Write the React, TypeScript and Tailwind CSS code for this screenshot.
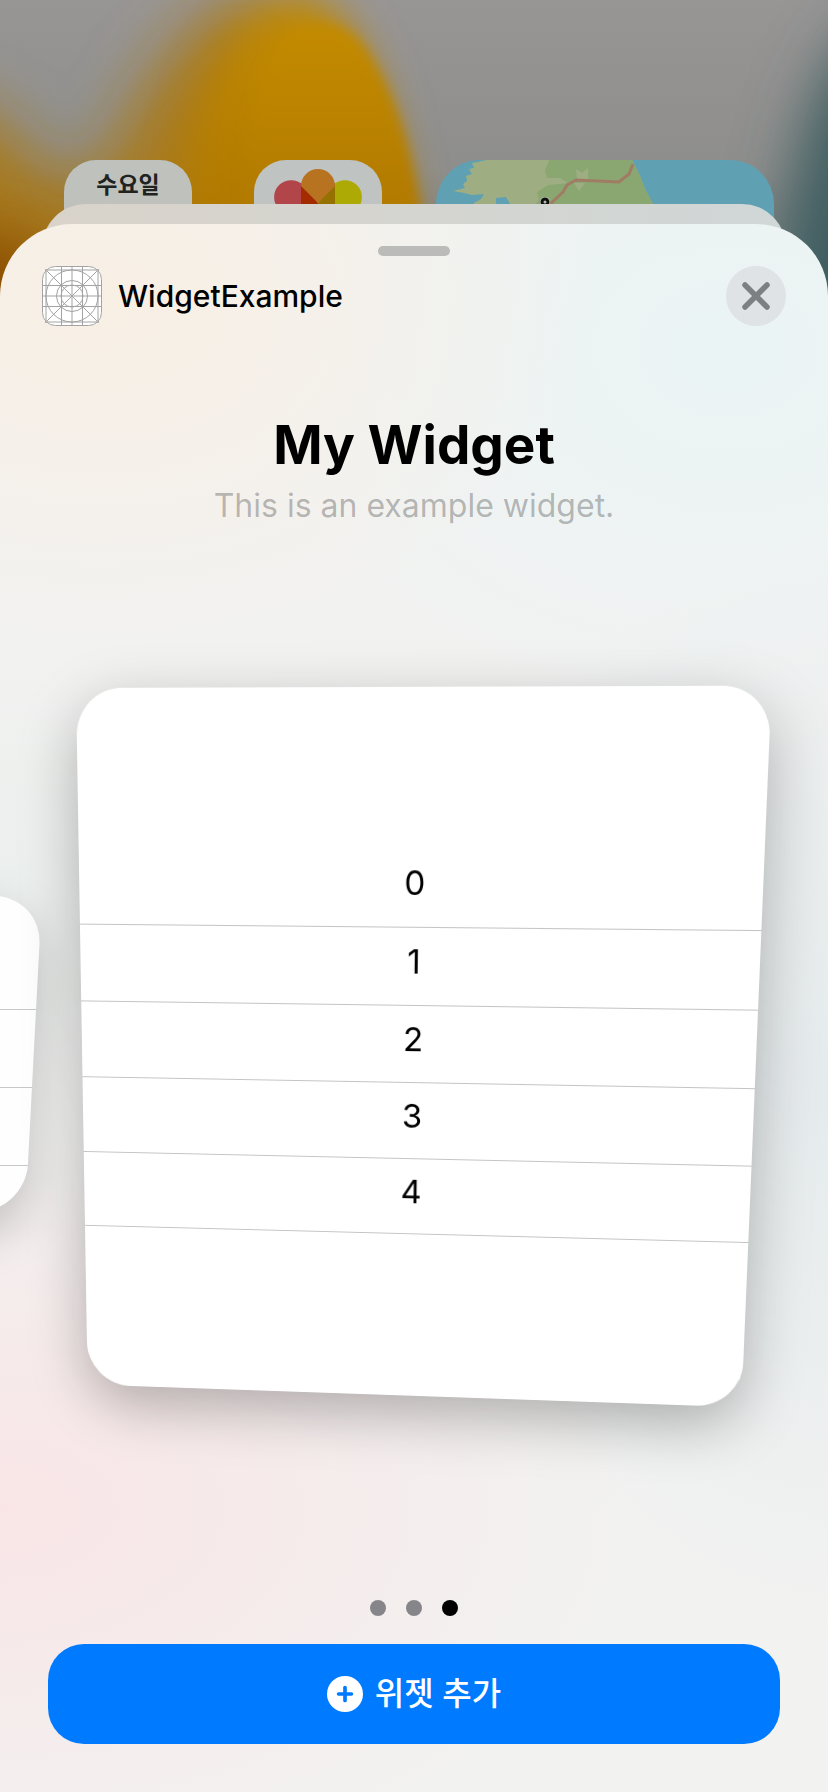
import { Plus, X } from "lucide-react";

const rows = [0, 1, 2, 3, 4];

function Wallpaper() {
  return (
    <svg
      className="absolute inset-x-0 top-0 h-[340px] w-full"
      viewBox="0 0 828 340"
      preserveAspectRatio="none"
      aria-hidden="true"
    >
      <defs>
        <linearGradient id="base" x1="0" y1="0" x2="0" y2="1">
          <stop offset="0" stopColor="#989595" />
          <stop offset="0.5" stopColor="#8e8e8c" />
          <stop offset="1" stopColor="#6c7474" />
        </linearGradient>
        <linearGradient id="orange" x1="0" y1="0" x2="0" y2="1">
          <stop offset="0" stopColor="#c38b00" />
          <stop offset="0.5" stopColor="#b17900" />
          <stop offset="1" stopColor="#955600" />
        </linearGradient>
        <filter id="soft" x="-50%" y="-50%" width="200%" height="200%">
          <feGaussianBlur stdDeviation="30" />
        </filter>
        <filter id="medium" x="-50%" y="-50%" width="200%" height="200%">
          <feGaussianBlur stdDeviation="20" />
        </filter>
        <filter id="edge" x="-50%" y="-50%" width="200%" height="200%">
          <feGaussianBlur stdDeviation="6" />
        </filter>
      </defs>
      <rect width="828" height="340" fill="url(#base)" />
      <path d="M-80 90L0 120L50 180L100 170L150 80L200 20L260 -10L300 60L330 420L-80 420Z" fill="#a87a1c" filter="url(#soft)" />
      <path d="M-80 220L40 240L100 420L-80 420Z" fill="#8c5000" filter="url(#soft)" />
      <path d="M165 420C165 250 180 110 235 40C265 -10 320 -20 350 30C390 90 420 200 430 420Z" fill="url(#orange)" filter="url(#medium)" />
      <path d="M240 420C235 250 240 120 270 55C290 20 340 10 366 50C405 110 428 190 440 420Z" fill="url(#orange)" filter="url(#edge)" />
      <path d="M870 20C815 70 780 160 772 400L950 400L950 0Z" fill="#3c5d61" filter="url(#soft)" />
    </svg>
  );
}

function CalendarIcon() {
  return (
    <div className="h-20 w-32 rounded-t-[32px] bg-[#bfc1bc] pt-3 text-center text-[23px] leading-[26px] font-semibold text-[#20231f]">
      수요일
    </div>
  );
}

function PhotosIcon() {
  return (
    <div className="ml-[62px] h-20 w-32 overflow-hidden rounded-t-[32px] bg-[#bfc3c1]">
      <svg className="h-32 w-32" viewBox="0 0 128 128" aria-hidden="true">
        <rect x="47" y="9" width="34" height="52" rx="17" fill="#b87320" />
        <rect x="47" y="9" width="34" height="55" rx="17" transform="rotate(-45 64 64)" fill="#b1454a" />
        <rect x="47" y="9" width="34" height="55" rx="17" transform="rotate(45 64 64)" fill="#adaa05" />
        <path d="M47 9H81V23L64 43L47 23Z" fill="#bfc3c1" />
        <path d="M47 23L64 43L64 61L47 61Z" fill="#a42a00" />
        <path d="M81 23L64 43L64 61L81 61Z" fill="#957200" />
        <path d="M47 26a17 17 0 0 1 34 0L64 43Z" fill="#b87320" />
      </svg>
    </div>
  );
}

function MapWidget() {
  return (
    <div className="ml-[54px] h-20 flex-1 overflow-hidden rounded-t-[44px] bg-[#5fa0b3]">
      <svg className="h-20 w-full" viewBox="0 0 338 80" preserveAspectRatio="xMinYMin slice" aria-hidden="true">
        <path
          d="M50 0L42 2L36 3L38 8L33 9L36 14L30 16L31 21L27 24L29 28L17 31L28 33L36 35L48 34L45 39L38 43L40 80L225 80L217 44L209 29L204 16L196 0Z"
          fill="#9fae82"
        />
        <path
          d="M113 0L109 10L111 18L124 18L132 23L112 25L101 32L103 40L96 48L225 80L217 44L209 29L204 16L196 0Z"
          fill="#8aa771"
        />
        <path d="M140 9L146 13L152 8V19H141ZM138 23L149 23L143 31Z" fill="#9fae82" />
        <path d="M60 38L70 37L74 44L60 44Z" fill="#5fa0b3" />
        <path d="M197 4L193 14L183 22L140 20L131 25L127 32L112 46" fill="none" stroke="#a17c64" strokeWidth="3" />
        <circle cx="109" cy="42" r="5" fill="#d5d8cf" />
        <circle cx="109" cy="42" r="3" fill="#b8bcae" stroke="#0d100d" strokeWidth="3" />
      </svg>
    </div>
  );
}

function AppIcon() {
  return (
    <svg className="size-[60px]" viewBox="0 0 60 60" fill="none" stroke="#a3a3a3" aria-hidden="true">
      <rect x="0.5" y="0.5" width="59" height="59" rx="13" fill="#fff" />
      <path d="M4 3V57M19.500 0V60M30 0V60M40.500 0V60M56 3V57" />
      <path d="M3 4H57M0 19.500H60M0 30H60M0 40.500H60M3 56H57" />
      <path d="M4 4L56 56M56 4L4 56" />
      <circle cx="30" cy="30" r="26" />
      <circle cx="30" cy="30" r="15.500" />
      <circle cx="30" cy="30" r="11" />
    </svg>
  );
}

function SheetHeader() {
  return (
    <header className="mt-[10px] flex items-center justify-between px-[42px]">
      <div className="flex items-center gap-4">
        <AppIcon />
        <span className="text-[30px] leading-10 font-medium">WidgetExample</span>
      </div>
      <button
        type="button"
        aria-label="닫기"
        className="flex size-[60px] items-center justify-center rounded-full bg-[#dfe3e5] text-[#7d8083]"
      >
        <X size={44} strokeWidth={3} />
      </button>
    </header>
  );
}

// The previous page of the carousel, peeking in from the left edge
function PreviousWidget() {
  return (
    <div className="absolute top-[368px] left-0 h-[316px] w-[42px] origin-top -skew-x-3" aria-hidden="true">
      <div className="absolute inset-y-0 right-0 w-[300px] rounded-[48px] bg-[#fefefe] pt-[36px] shadow-[0_20px_50px_rgba(0,0,0,0.22)]">
        <div className="h-[78px] border-b border-[#c8c8c8]"></div>
        <div className="h-[78px] border-b border-[#c8c8c8]"></div>
        <div className="h-[78px] border-b border-[#c8c8c8]"></div>
      </div>
    </div>
  );
}

function WidgetPreview() {
  return (
    <ul className="mx-[76px] origin-top-left transform-[matrix3d(0.99124,-0.003398,0,-0.00005436,0.017469,1.04511,0,0.00008813,0,0,1,0,0,0,0,1)] rounded-[46px] bg-white pt-[154px] pb-[169px] shadow-[0_20px_60px_rgba(0,0,0,0.28)] will-change-transform">
      {rows.map((row) => (
        <li
          key={row}
          className="h-[77px] border-b border-[#c4c4c4] text-center text-[33px] leading-[66px]"
        >
          {row}
        </li>
      ))}
    </ul>
  );
}

function PageDots() {
  return (
    <div className="flex justify-center gap-5">
      <span className="size-4 rounded-full bg-[#86868a]"></span>
      <span className="size-4 rounded-full bg-[#86868a]"></span>
      <span className="size-4 rounded-full bg-black"></span>
    </div>
  );
}

export default function App() {
  return (
    <div className="relative flex min-h-screen flex-col overflow-hidden bg-[#6c7474] font-['Inter','Noto_Sans_CJK_KR',sans-serif] text-black">
      <Wallpaper />
      <div className="relative flex px-16 pt-40 pr-[54px]">
        <CalendarIcon />
        <PhotosIcon />
        <MapWidget />
      </div>
      <div className="relative mx-[42px] -mt-9 h-20 rounded-t-[44px] bg-linear-to-r from-[#d9d3ca] to-[#d0d7d7]"></div>
      <main className="relative -mt-[60px] flex flex-1 flex-col overflow-hidden rounded-t-[72px] bg-[#f2f2f1] bg-[radial-gradient(ellipse_60%_22%_at_12%_5%,#f8efe4,transparent),radial-gradient(ellipse_60%_24%_at_88%_8%,#eaf4f5,transparent),radial-gradient(ellipse_75%_24%_at_0%_82%,#f9e5e6,transparent),radial-gradient(ellipse_45%_35%_at_100%_55%,#e5ebed,transparent),radial-gradient(ellipse_40%_15%_at_0%_42%,#ebefed,transparent)] pt-[22px] pb-12">
        <div className="h-[10px] w-[72px] self-center rounded-full bg-[#bbbbb9]"></div>
        <SheetHeader />
        <div className="mt-[86px] text-center">
          <h1 className="text-[53px] leading-[66px] font-bold">My Widget</h1>
          <p className="mt-[6px] text-[32px] leading-[44px] text-black/27">This is an example widget.</p>
        </div>
        <section className="relative flex-1 pt-40">
          <PreviousWidget />
          <WidgetPreview />
        </section>
        <PageDots />
        <button
          type="button"
          className="mx-12 mt-7 flex h-[100px] items-center justify-center gap-3 rounded-[36px] bg-[#007aff] text-[32px] leading-[48px] font-medium text-white"
        >
          <span className="flex size-9 items-center justify-center rounded-full bg-white text-[#007aff]">
            <Plus size={22} strokeWidth={4} />
          </span>
          위젯 추가
        </button>
      </main>
    </div>
  );
}
